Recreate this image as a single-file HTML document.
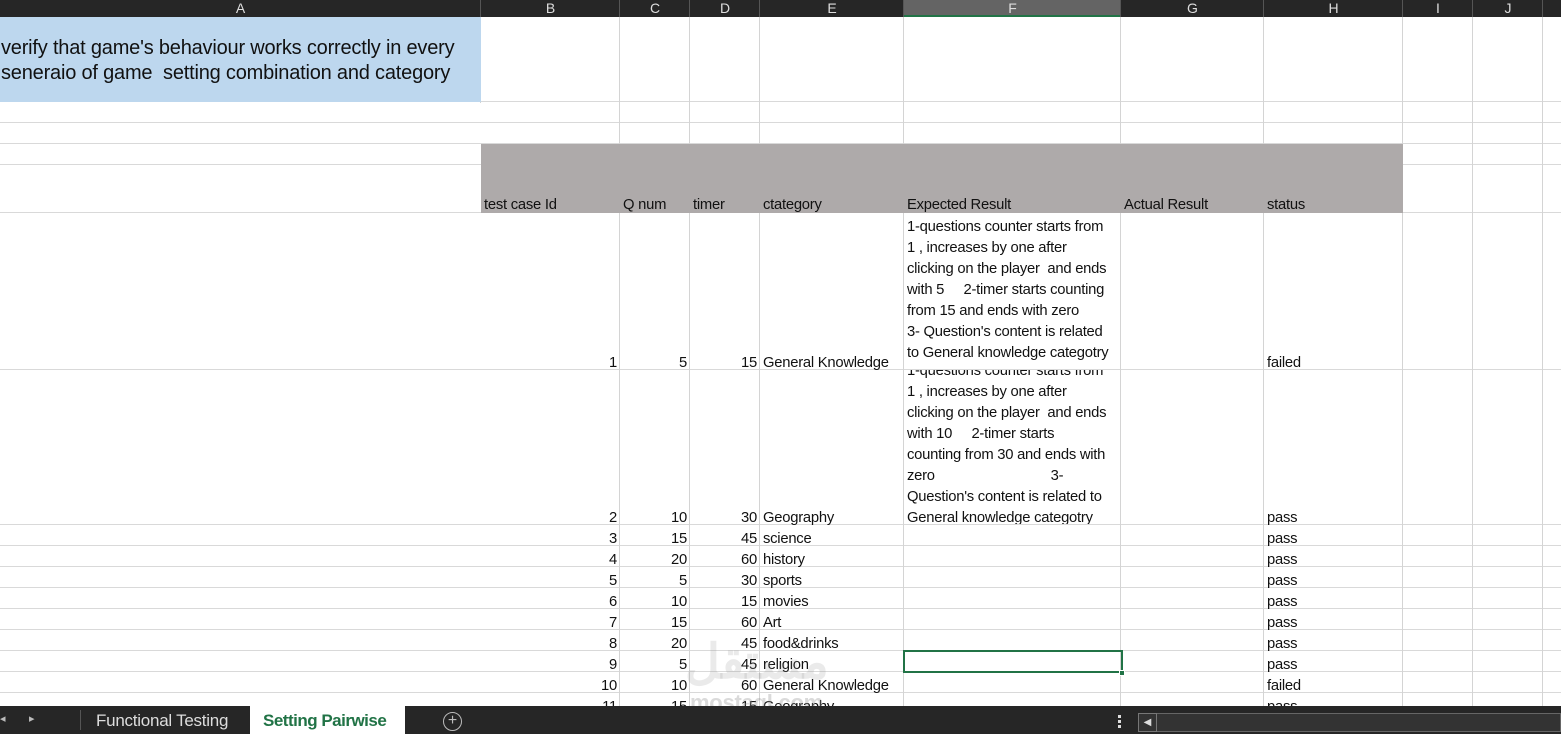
<!DOCTYPE html>
<html><head><meta charset="utf-8"><style>
*{margin:0;padding:0;box-sizing:border-box}
body{width:1561px;height:734px;overflow:hidden;background:#fff;position:relative;font-family:"Liberation Sans",sans-serif;color:#111}
.a{position:absolute}
.t{position:absolute;font-size:14.8px;line-height:21px;height:21px;white-space:pre;letter-spacing:-0.25px}
.hl{position:absolute;left:0;width:1561px;height:1px;background:#d9d9d9}
.vl{position:absolute;width:1px;background:#d4d4d4}
.ch{position:absolute;top:0;height:17px;line-height:17px;font-size:14px;color:#ddd;text-align:center}
</style></head><body>
<div id="g1"></div>
<div class="a" style="left:0;top:17px;width:481px;height:85px;background:#bdd7ee"></div>
<div class="a" style="left:481px;top:144px;width:922px;height:69px;background:#aeaaaa"></div>
<div class="t" style="left:1px;top:35px;font-size:20px;line-height:26px;height:26px;letter-spacing:-0.2px">verify that game's behaviour works correctly in every</div>
<div class="t" style="left:1px;top:60px;font-size:20px;line-height:26px;height:26px;letter-spacing:-0.2px">seneraio of game  setting combination and category</div>
<div id="g2"></div>
<div class="a" style="left:0;top:0;width:1561px;height:17px;background:#262626"></div>
<div class="a" style="left:904px;top:0;width:217px;height:17px;background:#646464;border-bottom:2px solid #217346"></div>
<div id="h"></div>
<div class="a" style="left:903px;top:650px;width:220px;height:23px;border:2px solid #217346"></div>
<div class="a" style="left:1119px;top:670px;width:6px;height:6px;background:#217346;border:1px solid #fff"></div>
<div class="t" style="left:685px;top:638px;font-size:48px;line-height:50px;height:50px;color:rgba(150,150,150,0.2);font-weight:bold">مستقل</div>
<div class="t" style="left:690px;top:690px;font-size:22px;line-height:26px;height:26px;color:rgba(150,150,150,0.35);font-weight:bold">mostaql.com</div>
<div class="a" style="left:0;top:706px;width:1561px;height:28px;background:#262626"></div>
<div class="t" style="left:0;top:709px;color:#bbb;font-size:11px">◂</div>
<div class="t" style="left:29px;top:709px;color:#bbb;font-size:11px">▸</div>
<div class="a" style="left:80px;top:710px;width:1px;height:20px;background:#555"></div>
<div class="t" style="left:96px;top:710px;color:#ddd;font-size:17px">Functional Testing</div>
<div class="a" style="left:250px;top:706px;width:155px;height:28px;background:#fff"></div>
<div class="t" style="left:263px;top:710px;color:#217346;font-size:17px;font-weight:bold;letter-spacing:-0.5px">Setting Pairwise</div>
<div class="a" style="left:443px;top:712px;width:19px;height:19px;border:1.5px solid #bbb;border-radius:50%;color:#bbb;text-align:center;line-height:15px;font-size:16px">+</div>
<div class="a" style="left:1118px;top:715px;width:3px;height:3px;background:#ddd;box-shadow:0 5px 0 #ddd,0 10px 0 #ddd"></div>
<div class="a" style="left:1138px;top:713px;width:423px;height:19px;border:1px solid #666;background:#333"></div>
<div class="a" style="left:1138px;top:713px;width:19px;height:19px;border:1px solid #777;color:#ddd;font-size:10px;line-height:17px;text-align:center">◀</div>
<script>
var s='',s2='';
var cols=[0,481,620,690,760,904,1121,1264,1403,1473,1543,1600];
var rows=[17,102,123,144,165,213,370,525];for(var y=546;y<=714;y+=21)rows.push(y);
rows.forEach(function(y){if(y>17)s+='<div class="hl" style="top:'+(y-1)+'px"></div>'});
for(var i=1;i<cols.length;i++)s+='<div class="vl" style="left:'+(cols[i]-1)+'px;top:17px;height:'+(i==1?86:690)+'px"></div>';
function T(x,b,txt,r,w){var st='top:'+(b-18)+'px;';if(r)st+='left:'+(x-w)+'px;width:'+w+'px;text-align:right;';else st+='left:'+x+'px;';return '<div class="t" style="'+st+'">'+txt+'</div>'}
var hb=213;
s2+=T(484,hb,'test case Id')+T(623,hb,'Q num')+T(693,hb,'timer')+T(763,hb,'ctategory')+T(907,hb,'Expected Result')+T(1124,hb,'Actual Result')+T(1267,hb,'status');
var data=[[1,5,15,'General Knowledge','failed',370],[2,10,30,'Geography','pass',525]];
var cats=['science','history','sports','movies','Art','food&amp;drinks','religion','General Knowledge','Geography'];
var q=[15,20,5,10,15,20,5,10,15],tm=[45,60,30,15,60,45,45,60,15],st=['pass','pass','pass','pass','pass','pass','pass','failed','pass'];
for(var k=0;k<9;k++)data.push([k+3,q[k],tm[k],cats[k],st[k],546+21*k]);
data.forEach(function(d){var b=d[5]+1;s2+=T(617,b,d[0],1,60)+T(687,b,d[1],1,60)+T(757,b,d[2],1,60)+T(763,b,d[3])+T(1267,b,d[4])});
var f1=['1-questions counter starts from','1 , increases by one after','clicking on the player  and ends','with 5     2-timer starts counting','from 15 and ends with zero','3- Question\'s content is related','to General knowledge categotry'];
f1.forEach(function(l,i){s2+=T(907,235+21*i,l)});
var f2=['1-questions counter starts from','1 , increases by one after','clicking on the player  and ends','with 10     2-timer starts','counting from 30 and ends with','zero                              3-','Question\'s content is related to','General knowledge categotry'];
var sb='';f2.forEach(function(l,i){sb+=T(0,(379+21*i)-370,l).replace('left:0px','left:3px')});
s2+='<div class="a" style="left:904px;top:370px;width:216px;height:154px;overflow:hidden">'+sb+'</div>';
document.getElementById('g1').innerHTML=s;
document.getElementById('g2').innerHTML=s2;
var L='ABCDEFGHIJ',hs='';for(var i=0;i<10;i++)hs+='<div class="ch" style="left:'+cols[i]+'px;width:'+(cols[i+1]-cols[i])+'px">'+L[i]+'</div>';
for(var i=1;i<11;i++)hs+='<div class="a" style="left:'+(cols[i]-1)+'px;top:0;width:1px;height:17px;background:#555"></div>';
document.getElementById('h').innerHTML=hs;
</script>
</body></html>
